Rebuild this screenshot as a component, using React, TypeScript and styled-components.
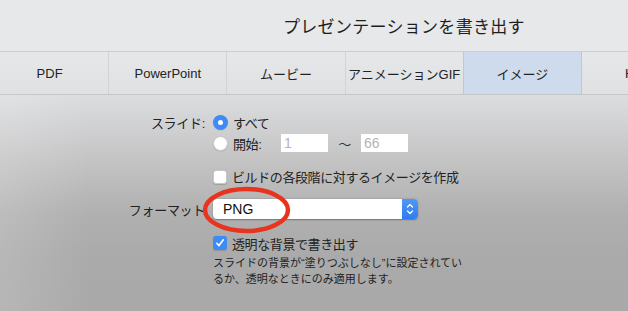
import React from "react";
import styled, { createGlobalStyle } from "styled-components";

const GlobalStyle = createGlobalStyle`
  html, body {
    margin: 0;
    padding: 0;
    overflow: hidden;
  }
  body {
    font-family: "Liberation Sans", "Noto Sans CJK JP", sans-serif;
    color: #222;
  }
`;

const Window = styled.div`
  width: 628px;
  height: 311px;
  display: flex;
  flex-direction: column;
  overflow: hidden;
  background: #e7e8e9;
`;

const Header = styled.div`
  height: 51px;
  display: flex;
  align-items: center;
  padding-left: 283px;
  box-sizing: border-box;
`;

const Title = styled.h1`
  margin: 0;
  font-size: 17px;
  font-weight: 400;
  color: #1e1e1e;
  letter-spacing: 0.3px;
`;

const TabBar = styled.div`
  height: 42px;
  display: flex;
  margin-left: -9px;
  margin-right: -100px;
  border-top: 1px solid #cdced0;
  border-bottom: 1px solid #c6c7c9;
  background: linear-gradient(#e6e7e9, #e0e1e3);
`;

const Tab = styled.div<{ $active?: boolean; $clipped?: boolean }>`
  flex: 0 0 118.2px;
  box-sizing: border-box;
  display: flex;
  align-items: center;
  justify-content: ${(p) => (p.$clipped ? "flex-start" : "center")};
  padding-left: ${(p) => (p.$clipped ? "43px" : "0")};
  font-size: 13px;
  color: #222;
  border-right: 1px solid ${(p) => (p.$active ? "#b9c9dd" : "#d2d3d5")};
  box-shadow: ${(p) => (p.$active ? "-1px 0 0 #b9c9dd" : "none")};
  background: ${(p) => (p.$active ? "#cddbec" : "transparent")};
  white-space: nowrap;
`;

const Content = styled.div`
  flex: 1;
  padding-top: 18px;
  display: flex;
  flex-direction: column;
  background:
    linear-gradient(to right, rgba(255, 255, 255, 0.16), rgba(255, 255, 255, 0) 90px),
    linear-gradient(#dcdddf 0%, #c4c4c5 30%, #b0b0b0 55%, #aaaaaa 75%, #a9a9a9 100%);
`;

const Row = styled.div<{ $h: number; $mt?: number }>`
  height: ${(p) => p.$h}px;
  margin-top: ${(p) => p.$mt ?? 0}px;
  display: grid;
  grid-template-columns: 205px 1fr;
  column-gap: 8px;
  align-items: center;
`;

const Label = styled.div`
  text-align: right;
  font-size: 13px;
  letter-spacing: -0.3px;
  color: #222;
  white-space: nowrap;
`;

const Field = styled.div`
  display: flex;
  align-items: center;
  gap: 5px;
  font-size: 13px;
  letter-spacing: -0.4px;
  white-space: nowrap;
`;

const Radio = styled.span<{ $on?: boolean }>`
  width: 15px;
  height: 15px;
  border-radius: 50%;
  box-sizing: border-box;
  display: flex;
  align-items: center;
  justify-content: center;
  background: ${(p) => (p.$on ? "#3d8bf6" : "#fff")};
  border: ${(p) => (p.$on ? "none" : "0.5px solid #c8c8c8")};
  box-shadow: 0 0.5px 1px rgba(0, 0, 0, 0.15);
  &::after {
    content: "";
    display: ${(p) => (p.$on ? "block" : "none")};
    width: 5px;
    height: 5px;
    border-radius: 50%;
    background: #fff;
  }
`;

const Check = styled.span<{ $on?: boolean }>`
  width: 14px;
  height: 14px;
  border-radius: 3px;
  box-sizing: border-box;
  display: flex;
  align-items: center;
  justify-content: center;
  background: ${(p) => (p.$on ? "#3d8bf6" : "#fff")};
  border: ${(p) => (p.$on ? "none" : "0.5px solid #c8c8c8")};
  box-shadow: 0 0.5px 1px rgba(0, 0, 0, 0.15);
`;

const StartLabel = styled.span`
  width: 43px;
`;

const NumBox = styled.div`
  width: 47px;
  height: 18px;
  background: #fff;
  color: #b4b4b4;
  font-size: 14px;
  letter-spacing: 0;
  line-height: 18px;
  padding-left: 3px;
  box-sizing: border-box;
`;

const Tilde = styled.span`
  width: 23px;
  text-align: center;
  color: #333;
`;

const SelectWrap = styled.div`
  position: relative;
  width: 205px;
`;

const Select = styled.div`
  height: 20px;
  display: flex;
  align-items: stretch;
  background: #fff;
  border-radius: 4px;
  box-shadow: 0 0.5px 1.5px rgba(0, 0, 0, 0.35);
  overflow: hidden;
`;

const SelectValue = styled.div`
  flex: 1;
  padding-left: 10px;
  font-size: 14px;
  line-height: 20px;
  color: #111;
`;

const Stepper = styled.div`
  width: 16px;
  background: linear-gradient(#4f98f8, #2f7cf0);
  display: flex;
  align-items: center;
  justify-content: center;
`;

const Annotation = styled.svg`
  position: absolute;
  left: -11px;
  top: -13px;
  pointer-events: none;
`;

const Note = styled.div`
  margin-top: 1px;
  padding-left: 213px;
  font-size: 11px;
  line-height: 16px;
  color: #222;
`;

const CheckMark = () => (
  <svg width="10" height="10" viewBox="0 0 10 10">
    <path d="M1.8 5.3 L4 7.6 L8.3 1.8" fill="none" stroke="#fff" strokeWidth="1.6" strokeLinecap="round" strokeLinejoin="round" />
  </svg>
);

const tabs = ["PDF", "PowerPoint", "ムービー", "アニメーションGIF", "イメージ", "HTML"];

export default function App() {
  return (
    <>
      <GlobalStyle />
      <Window>
        <Header>
          <Title>プレゼンテーションを書き出す</Title>
        </Header>
        <TabBar>
          {tabs.map((t, i) => (
            <Tab key={t} $active={t === "イメージ"} $clipped={i === tabs.length - 1}>
              {t}
            </Tab>
          ))}
        </TabBar>
        <Content>
          <Row $h={19}>
            <Label>スライド:</Label>
            <Field>
              <Radio $on />
              <span>すべて</span>
            </Field>
          </Row>
          <Row $h={20} $mt={1}>
            <span />
            <Field>
              <Radio />
              <StartLabel>開始:</StartLabel>
              <NumBox>1</NumBox>
              <Tilde>〜</Tilde>
              <NumBox>66</NumBox>
            </Field>
          </Row>
          <Row $h={21} $mt={13}>
            <span />
            <Field>
              <Check />
              <span>ビルドの各段階に対するイメージを作成</span>
            </Field>
          </Row>
          <Row $h={22} $mt={11}>
            <Label>フォーマット</Label>
            <SelectWrap>
              <Select>
                <SelectValue>PNG</SelectValue>
                <Stepper>
                  <svg width="8" height="14" viewBox="0 0 8 14">
                    <path d="M1.5 5 L4 2.5 L6.5 5 M1.5 9 L4 11.5 L6.5 9" fill="none" stroke="#fff" strokeWidth="1.3" strokeLinecap="round" strokeLinejoin="round" />
                  </svg>
                </Stepper>
              </Select>
              <Annotation width="90" height="48" viewBox="0 0 90 48">
                <ellipse cx="44.5" cy="24" rx="41.5" ry="21" fill="none" stroke="#e8341f" strokeWidth="4.5" />
              </Annotation>
            </SelectWrap>
          </Row>
          <Row $h={22} $mt={12}>
            <span />
            <Field>
              <Check $on>
                <CheckMark />
              </Check>
              <span>透明な背景で書き出す</span>
            </Field>
          </Row>
          <Note>
            スライドの背景が“塗りつぶしなし”に設定されてい
            <br />
            るか、透明なときにのみ適用します。
          </Note>
        </Content>
      </Window>
    </>
  );
}
